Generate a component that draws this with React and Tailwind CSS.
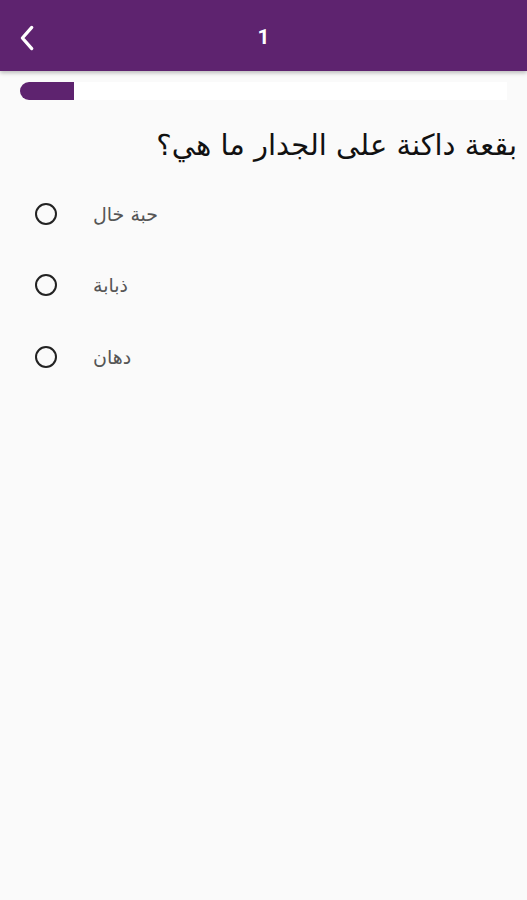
import React, { useState } from "react";

const options = ["حبة خال", "ذبابة", "دهان"];

const App = () => {
  const [selected, setSelected] = useState(null);

  return (
    <div
      className="min-h-screen w-full bg-[#fafafa]"
      style={{ fontFamily: '"DejaVu Sans", "Noto Sans", sans-serif' }}
    >
      {/* Header */}
      <div className="relative h-[71px] bg-[#5e236f] flex items-center shadow-[0_2px_4px_rgba(0,0,0,0.25)]">
        <button className="w-[56px] h-full flex items-center justify-center pt-[4px]">
          <svg width="30" height="30" viewBox="0 0 24 24" fill="none">
            <path
              d="M15 3.5 L7.5 12 L15 20.5"
              stroke="white"
              strokeWidth="2.6"
              strokeLinecap="round"
              strokeLinejoin="round"
            />
          </svg>
        </button>
        <div
          className="absolute left-0 right-0 top-0 h-full flex items-center justify-center pt-[5px] text-white text-[21px] font-bold pointer-events-none"
          style={{ fontFamily: '"Roboto", sans-serif' }}
        >
          1
        </div>
      </div>

      {/* Progress */}
      <div className="px-[20px] pt-[11px]">
        <div className="h-[18px] bg-white rounded-l-full flex">
          <div className="w-[54px] h-full bg-[#5e236f] rounded-l-full"></div>
        </div>
      </div>

      {/* Question */}
      <div
        dir="rtl"
        className="pr-[10px] pl-4 pt-[26px] text-[29px] text-[#111] leading-[38px]"
      >
        بقعة داكنة على الجدار ما هي؟
      </div>

      {/* Options */}
      <div className="pt-[14px] flex flex-col">
        {options.map((opt, i) => (
          <button
            key={opt}
            onClick={() => setSelected(i)}
            className="flex items-center h-[71.5px] pl-[35px] text-left"
          >
            <span className="w-[22px] h-[22px] rounded-full border-[2.5px] border-[#222] flex items-center justify-center">
              {selected === i && (
                <span className="w-[10px] h-[10px] rounded-full bg-[#5e236f]"></span>
              )}
            </span>
            <span className="ml-[36px] text-[19px] text-[#555]">{opt}</span>
          </button>
        ))}
      </div>
    </div>
  );
};

export default App;
